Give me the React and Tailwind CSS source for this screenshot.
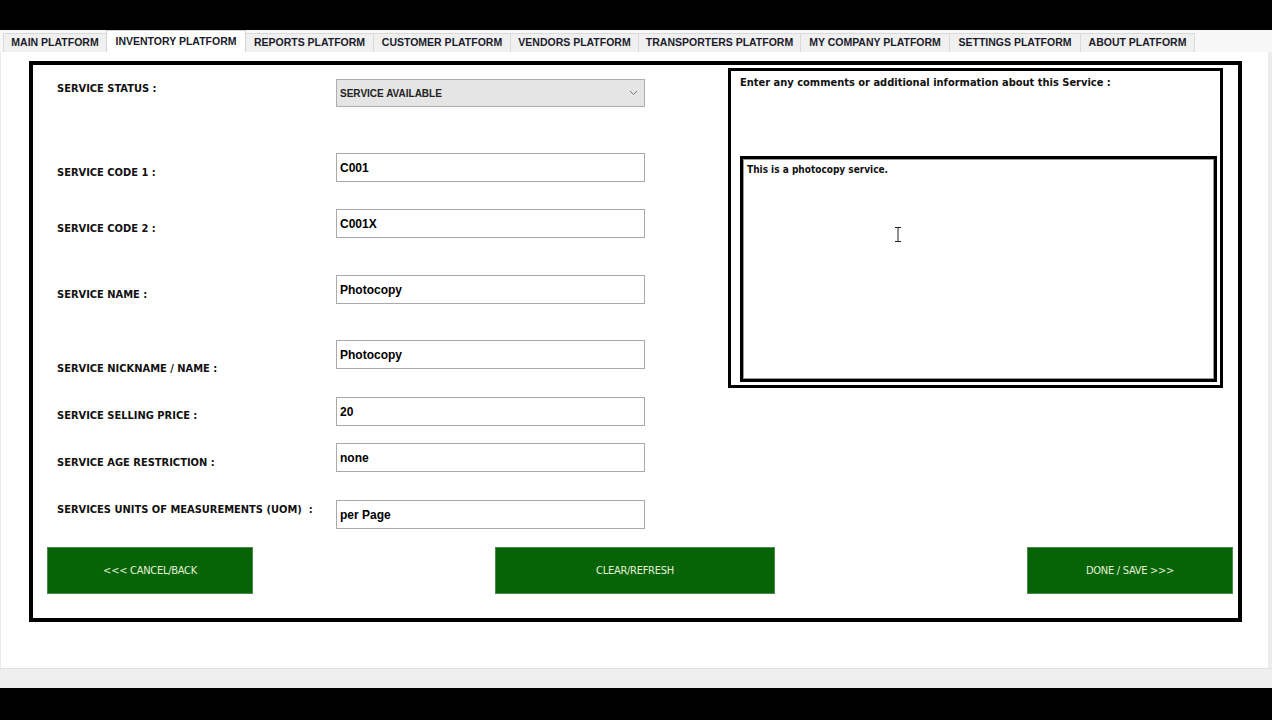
import React from 'react';

const narrow = "font-['Liberation_Sans_Narrow','DejaVu_Sans_Condensed','Liberation_Sans',sans-serif]";
const arial = "font-['Liberation_Sans',Arial,sans-serif]";

const tabs = [
  { name: 'MAIN PLATFORM', w: 'w-[104px]' },
  { name: 'INVENTORY PLATFORM', w: 'w-[140px]', active: true },
  { name: 'REPORTS PLATFORM', w: 'w-[129px]' },
  { name: 'CUSTOMER PLATFORM', w: 'w-[138px]' },
  { name: 'VENDORS PLATFORM', w: 'w-[129px]' },
  { name: 'TRANSPORTERS PLATFORM', w: 'w-[163px]' },
  { name: 'MY COMPANY PLATFORM', w: 'w-[150px]' },
  { name: 'SETTINGS PLATFORM', w: 'w-[132px]' },
  { name: 'ABOUT PLATFORM', w: 'w-[115px]' },
];

// row height / label offset / value
const rows = [
  { label: 'SERVICE CODE 1 :', value: 'C001', h: 'h-[56px]', lt: 'mt-[12px]' },
  { label: 'SERVICE CODE 2 :', value: 'C001X', h: 'h-[66px]', lt: 'mt-[12px]' },
  { label: 'SERVICE NAME :', value: 'Photocopy', h: 'h-[65px]', lt: 'mt-[12px]' },
  { label: 'SERVICE NICKNAME / NAME :', value: 'Photocopy', h: 'h-[57px]', lt: 'mt-[21px]' },
  { label: 'SERVICE SELLING PRICE :', value: '20', h: 'h-[46px]', lt: 'mt-[11px]' },
  { label: 'SERVICE AGE RESTRICTION :', value: 'none', h: 'h-[57px]', lt: 'mt-[12px]' },
  { label: 'SERVICES UNITS OF MEASUREMENTS (UOM)  :', value: 'per Page', h: 'h-[47px]', lt: 'mt-[2px]' },
];

const Label = ({ children, className }) => (
  <div className={`w-[279px] shrink-0 text-[11px] leading-[16px] font-bold text-[#111] whitespace-pre ${narrow} ${className}`}>
    {children}
  </div>
);

const Field = ({ value }) => (
  <div className={`w-[309px] h-[29px] border border-[#a9a9a9] bg-white flex items-center pl-[3px] text-[12px] font-bold text-black ${arial}`}>
    {value}
  </div>
);

const GreenButton = ({ children, className }) => (
  <button
    className={`h-[47px] bg-[#066306] border border-[#4a8a4a] text-[#e4f1d8] text-[11px] tracking-tight flex items-center justify-center pt-[2px] ${narrow} ${className}`}
  >
    {children}
  </button>
);

const App = () => {
  return (
    <div className="w-[1272px] h-[720px] bg-black flex flex-col overflow-hidden">
      <div className="h-[30px] shrink-0" />

      {/* tab strip */}
      <div className="h-[22px] shrink-0 bg-[#f7f7f7] flex items-end pl-[3px]">
        {tabs.map(t => (
          <div
            key={t.name}
            className={`${t.w} shrink-0 flex items-center justify-center border-t border-l border-r text-[10.5px] font-bold text-[#1a1a2a] ${arial} ${
              t.active
                ? 'h-[22px] bg-white border-[#d4d4d4] -mr-px relative z-10'
                : 'h-[19px] bg-[#f0f0f0] border-[#dadada] -mr-px'
            }`}
          >
            {t.name}
          </div>
        ))}
      </div>

      {/* content panel */}
      <div className="h-[616px] shrink-0 bg-white border-l border-r-4 border-[#ececec] pt-[9px] pl-[28px]">
        <div className="w-[1213px] h-[561px] border-4 border-black flex flex-col">
          <div className="flex">
            {/* form */}
            <div className="w-[612px] pl-[24px] pt-[14px] flex flex-col">
              <div className="h-[74px] flex items-start">
                <Label className="mt-[2px]">SERVICE STATUS :</Label>
                <div className={`w-[309px] h-[28px] border border-[#adadad] bg-[#e5e5e5] flex items-center justify-between pl-[3px] pr-[6px] text-[10px] font-bold text-[#222] ${arial}`}>
                  <span>SERVICE AVAILABLE</span>
                  <svg width="9" height="6" viewBox="0 0 9 6" fill="none" stroke="#777" strokeWidth="1">
                    <path d="M1 1 L4.5 4.5 L8 1" />
                  </svg>
                </div>
              </div>
              {rows.map(r => (
                <div key={r.label} className={`${r.h} flex items-start`}>
                  <Label className={r.lt}>{r.label}</Label>
                  <Field value={r.value} />
                </div>
              ))}
            </div>

            {/* comments box */}
            <div className="ml-[83px] mt-[3px] w-[495px] h-[320px] border-[3px] border-black pl-[9px] pr-[3px]">
              <div className={`h-[85px] pt-[4px] text-[11px] leading-[16px] font-bold text-[#111] ${narrow}`}>
                Enter any comments or additional information about this Service :
              </div>
              <div className="relative w-[477px] h-[226px] border-[3px] border-black shadow-[inset_0_0_0_1px_#9a9a9a] px-[4px] pt-[4px]">
                <div className={`text-[10px] leading-[14px] font-bold text-[#111] ${narrow}`}>
                  This is a photocopy service.
                </div>
                <svg className="absolute left-[151px] top-[68px]" width="8" height="15" viewBox="0 0 8 15" fill="none" stroke="#222" strokeWidth="1">
                  <path d="M1 0.5 H7 M4 0.5 V14.5 M1 14.5 H7" />
                </svg>
              </div>
            </div>
          </div>

          {/* buttons */}
          <div className="flex pl-[14px]">
            <GreenButton className="w-[206px]">{'<<< CANCEL/BACK'}</GreenButton>
            <GreenButton className="w-[280px] ml-[242px]">CLEAR/REFRESH</GreenButton>
            <GreenButton className="w-[206px] ml-[252px]">{'DONE / SAVE >>>'}</GreenButton>
          </div>
        </div>
      </div>

      <div className="h-[20px] shrink-0 bg-[#efefef] border-t border-[#e2e2e2]" />
      <div className="flex-1" />
    </div>
  );
};

export default App;
